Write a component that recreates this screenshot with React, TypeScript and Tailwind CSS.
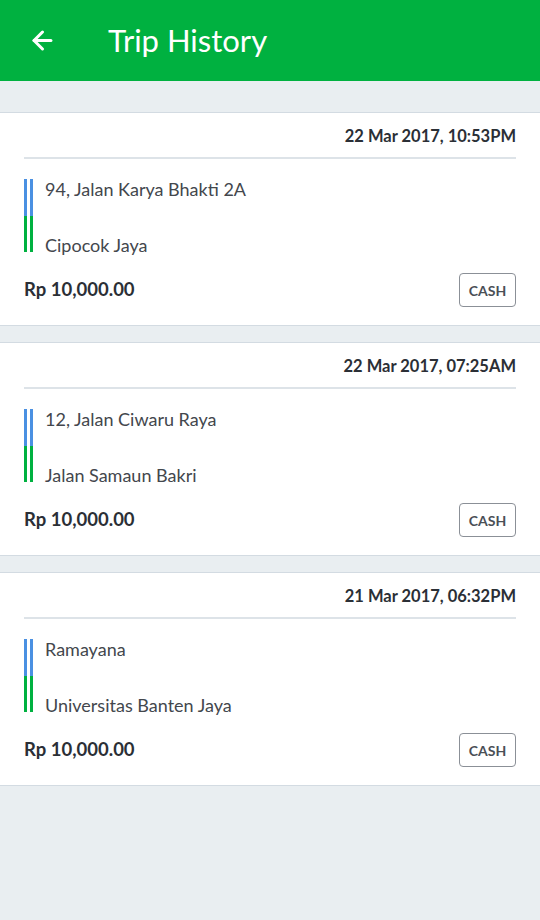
import React from 'react';
import { ArrowLeft } from 'lucide-react';

type Trip = {
  id: number;
  date: string;
  pickup: string;
  dropoff: string;
  fare: string;
  payment: string;
};

const trips: Trip[] = [
  { id: 1, date: '22 Mar 2017, 10:53PM', pickup: '94, Jalan Karya Bhakti 2A', dropoff: 'Cipocok Jaya', fare: 'Rp 10,000.00', payment: 'CASH' },
  { id: 2, date: '22 Mar 2017, 07:25AM', pickup: '12, Jalan Ciwaru Raya', dropoff: 'Jalan Samaun Bakri', fare: 'Rp 10,000.00', payment: 'CASH' },
  { id: 3, date: '21 Mar 2017, 06:32PM', pickup: 'Ramayana', dropoff: 'Universitas Banten Jaya', fare: 'Rp 10,000.00', payment: 'CASH' },
];

const TripCard: React.FC<{ trip: Trip }> = ({ trip }) => (
  <div className="bg-white border-y border-[#d3dbe2] px-6">
    {/* Date */}
    <div className="pt-[12px] pb-[10px] text-right text-[16.5px] leading-[22px] font-bold text-[#2b2f36]">
      {trip.date}
    </div>
    <div className="h-[2px] bg-[#dde3e8]" />

    {/* Route */}
    <div className="mt-[20px] flex h-[73px]">
      <div className="flex gap-[3px]">
        <div className="flex w-[3px] flex-col">
          <div className="flex-1 bg-[#4a90e2]" />
          <div className="flex-1 bg-[#00b140]" />
        </div>
        <div className="flex w-[3px] flex-col">
          <div className="flex-1 bg-[#4a90e2]" />
          <div className="flex-1 bg-[#00b140]" />
        </div>
      </div>
      <div className="ml-[12px] flex flex-col justify-between text-[18px] leading-[20px] text-[#43474d]">
        <span>{trip.pickup}</span>
        <span className="mb-[-3px]">{trip.dropoff}</span>
      </div>
    </div>

    {/* Fare */}
    <div className="mt-[21px] mb-[18px] flex items-center justify-between">
      <span className="text-[18.5px] font-bold text-[#2b2f36]">{trip.fare}</span>
      <span className="flex h-[34px] w-[57px] items-center justify-center rounded-[4px] border border-[#8b9097] text-[14px] font-bold text-[#4a4f56]">
        {trip.payment}
      </span>
    </div>
  </div>
);

export default function App() {
  return (
    <div className="min-h-screen bg-[#e9eef1]" style={{ fontFamily: 'Lato, "Open Sans", sans-serif' }}>
      <header className="flex h-[81px] items-center bg-[#00b140] text-white">
        <ArrowLeft className="ml-[28px] h-[29px] w-[29px]" strokeWidth={2.5} />
        <h1 className="ml-[51px] text-[31px] font-normal leading-none">Trip History</h1>
      </header>

      <div className="flex flex-col gap-4 pt-[31px]">
        {trips.map((trip) => (
          <TripCard key={trip.id} trip={trip} />
        ))}
      </div>
    </div>
  );
}
